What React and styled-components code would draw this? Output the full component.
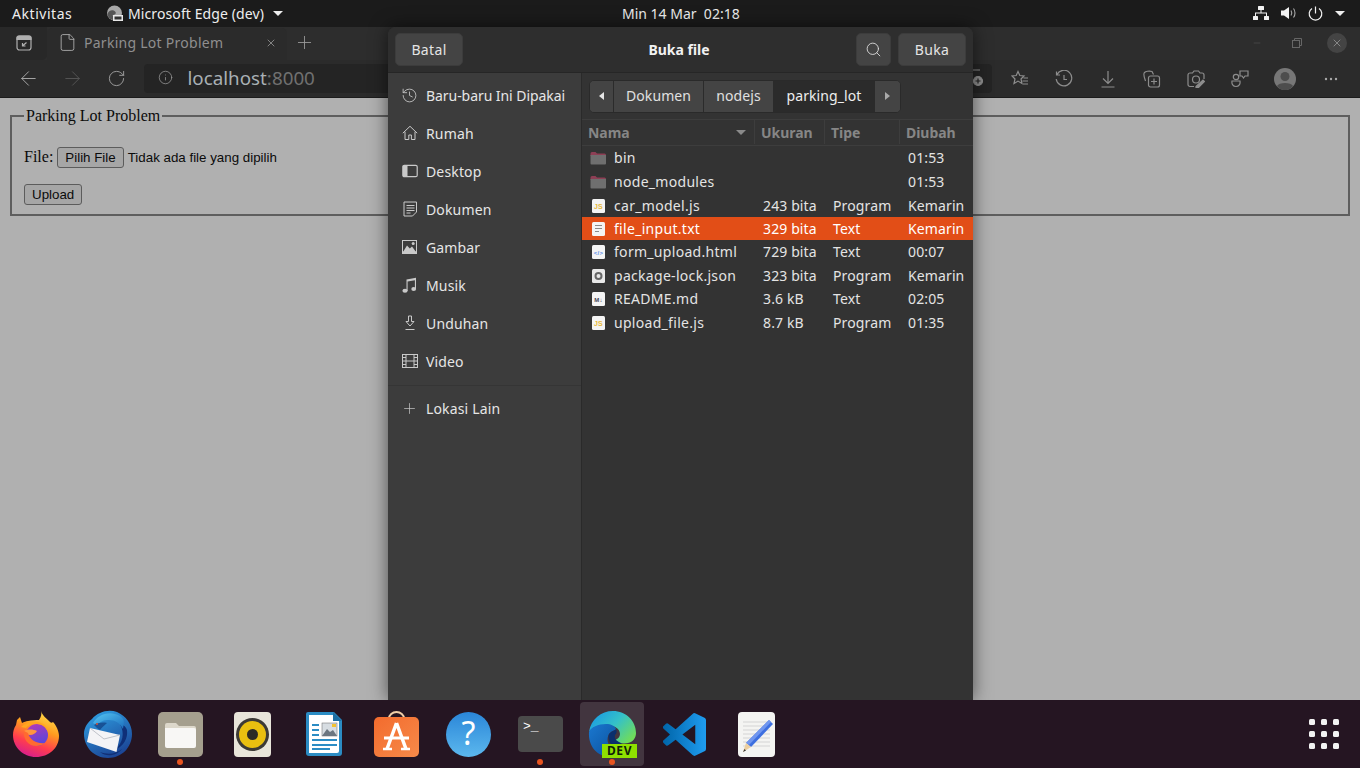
import React from "react";
import styled, { createGlobalStyle } from "styled-components";
import { History, Search, Plus, X, ArrowLeft, ArrowRight, RotateCw, Info, File as FileIcon, Minus } from "lucide-react";

const Global = createGlobalStyle`
  html, body { margin: 0; padding: 0; background: #000; }
  * { box-sizing: border-box; }
`;
const UI = `"Noto Sans", "Open Sans", sans-serif`;

const Screen = styled.div`
  width: 1360px; height: 768px; position: relative; overflow: hidden;
  display: flex; flex-direction: column; font-family: ${UI};
`;
const TopBar = styled.header`
  height: 27px; flex: none; background: #1b1b1b; color: #eee; font-size: 14px;
  display: grid; grid-template-columns: 622px auto 1fr; align-items: center;
  padding-bottom: 1px;
`;
const TopLeft = styled.div`display: flex; align-items: center; padding-left: 12px;`;
const Activities = styled.span`width: 94px; letter-spacing: .55px;`;
const AppName = styled.span`margin: 0 5px 0 5px; letter-spacing: .1px;`;
const Clock = styled.div`white-space: pre;`;
const TopRight = styled.div`display: flex; justify-content: flex-end; align-items: center; gap: 12px; padding-right: 15px;`;
const Caret = styled.i`
  display: block; width: 0; height: 0; border-left: 5px solid transparent; border-right: 5px solid transparent;
  border-top: 5px solid ${p => p.$color || "#eee"}; margin-left: ${p => p.$ml || 0}px;
`;

const TabStrip = styled.div`
  height: 33px; flex: none; background: #2d2d2d; display: flex; align-items: flex-end; padding-right: 3px;
`;
const TabActions = styled.div`
  width: 47px; height: 100%; display: flex; align-items: center; justify-content: center; background: #282828;
  border-bottom-right-radius: 5px; padding-bottom: 2px;
`;
const Tab = styled.div`
  width: 240px; height: 32px; background: #2b2b2b; border-radius: 5px 5px 0 0; display: flex; align-items: center;
  padding: 0 10px 3px 11px; color: #8f8f8f; font-size: 14px;
`;
const TabTitle = styled.span`flex: 1; margin-left: 7px; letter-spacing: .27px;`;
const NewTab = styled.div`width: 34px; height: 100%; padding-bottom: 3px; display: flex; align-items: center; justify-content: center; color: #9a9a9a;`;
const WinControls = styled.div`margin-left: auto; display: flex; height: 100%; align-items: center; padding-bottom: 2px;`;
const WinBtn = styled.div`
  width: 40px; height: 100%; display: flex; align-items: center; justify-content: center; color: #666;
`;
const CloseCircle = styled.div`width: 20px; height: 20px; border-radius: 50%; background: #444; color: #aaa; display: flex; align-items: center; justify-content: center;`;

const Toolbar = styled.div`
  height: 38px; flex: none; background: #2b2b2b; display: flex; align-items: center; padding: 0 6px 0 7px;
  border-bottom: 1px solid #1c1c1c;
`;
const NavBtn = styled.div`width: 43.5px; display: flex; justify-content: center; color: ${p => p.$dim ? "#555" : "#a8a8a8"};`;
const ReloadBtn = styled(NavBtn)`padding-left: 2px;`;
const Address = styled.div`
  flex: 1; height: 29px; background: #242424; border-radius: 4px; margin: 0 6px 1px 6px;
  display: flex; align-items: center; padding: 0 7px 1px 14px; color: #999; font-size: 18.8px;
`;
const Host = styled.span`color: #a9b0b5; margin-left: 15px; flex: 1;`;
const Port = styled.span`color: #707070;`;
const ToolIcon = styled.div`width: ${p => p.$w || 44}px; display: flex; justify-content: center; color: #8d8d8d;`;

const Page = styled.main`
  flex: 1; background: #b0b0b0; padding: 9px 10px 0; font-family: "Liberation Serif", serif; font-size: 16px; color: #0b0b0b;
`;
const Fieldset = styled.fieldset`
  margin: 0; border: 2px solid #5e5e5e; padding: 21px 12px 8px; height: 109px;
  legend { padding: 0 2px 0 2px; line-height: 18px; }
`;
const FileRow = styled.div`display: flex; align-items: center; height: 22px; margin-bottom: 16px;`;
const PageBtn = styled.span`
  display: inline-flex; align-items: center; justify-content: center; height: 21px; padding: 0 7px; background: #a6a6a6;
  border: 1px solid #5c5c5c; border-radius: 3px; font: 13.33px "Liberation Sans", sans-serif; color: #0b0b0b;
`;
const FileHint = styled.span`font: 13.33px "Liberation Sans", sans-serif; margin-left: 4px;`;
const FileLabel = styled.span`margin-right: 4px;`;

const Dock = styled.footer`
  height: 68px; flex: none; background: #251522; display: flex; align-items: stretch; position: relative; z-index: 2;
`;
const DockItem = styled.div`
  width: 72px; height: 68px; position: relative; display: flex; align-items: center; justify-content: center;
  ${p => p.$active && `
    &::before { content: ""; position: absolute; left: 4px; right: 4px; top: 2px; bottom: 2px; background: #42353f; border-radius: 4px; }
  `}
  ${p => p.$running && `
    &::after { content: ""; position: absolute; left: 33px; bottom: 3px; width: 6px; height: 6px; border-radius: 50%; background: #e95420; }
  `}
  svg { position: relative; }
`;
const DockSpacer = styled.div`flex: 1;`;
const DevTag = styled.span`
  position: absolute; left: 26px; top: 44px; width: 35px; height: 14px; background: #8ee000; color: #10200a;
  font: 700 12px/14px ${UI}; text-align: center; letter-spacing: .6px;
`;

const Dialog = styled.section`
  position: absolute; left: 388px; top: 27px; width: 585px; height: 673px; z-index: 1;
  background: #333; border-radius: 8px 8px 0 0; display: flex; flex-direction: column; color: #e8e8e8;
  box-shadow: 0 0 18px rgba(0,0,0,.55); font-size: 14px;
`;
const DialogHeader = styled.div`
  height: 46px; flex: none; background: #2e2e2e; border-bottom: 1px solid #262626; border-radius: 8px 8px 0 0;
  display: flex; align-items: center; padding: 0 7px; gap: 7px;
`;
const HeadBtn = styled.button`
  height: 33px; width: ${p => p.$w}px; border: 1px solid #3c3c3c; border-radius: 5px; background: #444; color: #e4e4e4; padding: 0;
  font: 14px ${UI}; letter-spacing: .35px; display: flex; align-items: center; justify-content: center; margin-top: -1px;
`;
const DialogTitle = styled.div`flex: 1; text-align: center; font-weight: 700; font-size: 14px; color: #f2f2f2; padding-left: 39px; margin-top: -1px;`;
const DialogBody = styled.div`flex: 1; display: flex; min-height: 0;`;
const Sidebar = styled.nav`width: 194px; flex: none; background: #3c3c3c; border-right: 1px solid #2a2a2a; padding-top: 3px;`;
const Place = styled.div`
  height: 38px; display: flex; align-items: center; padding-left: 13px; gap: 8px; color: #e6e6e6; font-size: 14px; letter-spacing: ${p => p.$tight ? "-.06px" : ".15px"};
`;
const PlaceIcon = styled.span`width: 17px; height: 17px; flex: none; display: flex; align-items: center; justify-content: center; color: #c9c9c9;`;
const SideDivider = styled.div`height: 1px; background: #353535; margin: 5px 0 3px;`;
const Main = styled.div`flex: 1; min-width: 0; display: flex; flex-direction: column;`;
const PathBarWrap = styled.div`height: 47px; flex: none; padding: 7px 0 0 7px; border-bottom: 1px solid #3d3d3d;`;
const PathBar = styled.div`
  display: inline-flex; height: 33px; border: 1px solid #2a2a2a; border-radius: 5px; overflow: hidden; background: #444;
`;
const PathSeg = styled.div`
  width: ${p => p.$w}px; display: flex; align-items: center; justify-content: center; color: ${p => p.$on ? "#eee" : "#e0e0e0"};
  background: ${p => p.$on ? "#2b2b2b" : "#444"}; border-right: ${p => p.$sep ? "1px solid #2b2b2b" : "none"}; font-size: 14px; letter-spacing: .1px; padding-bottom: 2px;
`;
const TriL = styled.i`width: 0; height: 0; border-top: 4.5px solid transparent; border-bottom: 4.5px solid transparent; border-right: 5px solid #e6e6e6;`;
const TriR = styled.i`width: 0; height: 0; border-top: 4.5px solid transparent; border-bottom: 4.5px solid transparent; border-left: 5px solid #aaa;`;
const ListHeader = styled.div`
  display: grid; grid-template-columns: 172px 70px 75px 1fr; height: 26px; padding-bottom: 1px; flex: none; border-bottom: 1px solid #3d3d3d;
  font-size: 14px; font-weight: 700; color: #868686; letter-spacing: -.05px;
`;
const HeadCell = styled.div`
  display: flex; align-items: center; justify-content: space-between; padding: 0 ${p => p.$pr || 0}px 0 6px;
  border-left: ${p => p.$first ? "none" : "1px solid #3d3d3d"};
`;
const SortCaret = styled.i`width: 0; height: 0; border-left: 5px solid transparent; border-right: 5px solid transparent; border-top: 5px solid #8a8a8a;`;
const Row = styled.div`
  display: grid; grid-template-columns: 173px 70px 75px 1fr; height: ${p => p.$h}px; padding-bottom: ${p => p.$h - 23}px; align-items: center; font-size: 14px; letter-spacing: .12px;
  color: ${p => p.$sel ? "#fff" : "#e4e4e4"}; background: ${p => p.$sel ? "#e24e17" : "transparent"};
`;
const NameCell = styled.div`display: flex; align-items: center; padding-left: 8px; gap: 8px; white-space: nowrap; letter-spacing: .3px;`;
const FileGlyph = styled.span`width: 16px; height: 16px; flex: none; display: flex; align-items: center; justify-content: center;`;
const Cell = styled.div`padding-left: 8px; white-space: nowrap;`;

const S = { fill: "none", stroke: "currentColor", strokeWidth: 1.2 };

const EdgeMini = () => (
  <svg width="17" height="17" viewBox="0 0 17 17">
    <circle cx="8.5" cy="8" r="7.5" fill="#a8a8a8" />
    <path d="M1.5 9c1-4 6-5 8-2 1 2-1 3-3 3 1 3 4 5 8 2-2 4-12 5-13-3z" fill="#555" />
    <rect x="7" y="10" width="10" height="6" fill="#e8e8e8" />
    <rect x="8.5" y="11.5" width="7" height="3" fill="#333" />
  </svg>
);
const NetIcon = () => (
  <svg width="16" height="14" viewBox="0 0 16 14" fill="#f2f2f2">
    <rect x="5" y="0" width="6" height="4" rx=".5" /><rect x="0" y="10" width="5" height="4" rx=".5" /><rect x="11" y="10" width="5" height="4" rx=".5" />
    <path d="M7.5 4h1v2.500h5.500V10h-1V7.500H3V10H2V6.500h5.500z" />
  </svg>
);
const SpeakerIcon = () => (
  <svg width="15" height="14" viewBox="0 0 15 14">
    <path d="M0 4.500h3L8 1v12L3 9.500H0z" fill="#f2f2f2" />
    <path d="M10 4.500c1 1.500 1 3.500 0 5M12.500 2.500c2 2.500 2 6.500 0 9" fill="none" stroke="#aaa" strokeWidth="1.100" />
  </svg>
);
const PowerIcon = () => (
  <svg width="15" height="15" viewBox="0 0 15 15" fill="none" stroke="#f2f2f2" strokeWidth="1.200">
    <path d="M7.500 0.500v7M4 2.500a6.300 6.300 0 1 0 7 0" />
  </svg>
);
const TabActionIcon = () => (
  <svg width="16" height="16" viewBox="0 0 16 16" fill="none" stroke="#b0b0b0" strokeWidth="1.200">
    <rect x="1" y="1" width="14" height="14" rx="2.500" /><path d="M1 4.500h14V2.500a1.500 1.500 0 0 0-1.500-1.500h-11A1.500 1.500 0 0 0 1 2.500z" fill="#b0b0b0" />
    <path d="M10.500 7.500l-3.500 3M6.500 8v3h3" />
  </svg>
);
const StarList = () => (
  <svg width="18" height="18" viewBox="0 0 18 18" {...S}>
    <path d="M7 1.500l1.800 4 4.200.5-3 3 1 4.500-4-2.400-4 2.400 1-4.500-3-3 4.200-.5zM12.500 8H17M11.500 11H17M12 14h5" />
  </svg>
);
const HistIcon = () => (
  <svg width="18" height="18" viewBox="0 0 18 18" {...S}>
    <path d="M2 4.500A7.800 7.800 0 1 1 1.200 9M1.500 1.500v3.500H5M9 5v4.500h3" />
  </svg>
);
const DownIcon = () => (
  <svg width="18" height="18" viewBox="0 0 18 18" {...S}>
    <path d="M9 1v12M4 8.500l5 5 5-5M2.500 17h13" />
  </svg>
);
const Collections = () => (
  <svg width="18" height="18" viewBox="0 0 18 18" {...S}>
    <path d="M2.500 11C1 7 .5 3.500 1.500 2.500S6 .5 9 1.500l1.500 3" /><rect x="5.500" y="6" width="11" height="11" rx="2" /><path d="M11 8.500v6M8 11.500h6" />
  </svg>
);
const CamIcon = () => (
  <svg width="18" height="18" viewBox="0 0 18 18" {...S}>
    <path d="M7 16.500H3a2 2 0 0 1-2-2V5a2 2 0 0 1 2-2h2.500L7 1h4.500L13 3h2a2 2 0 0 1 2 2v4" /><circle cx="9" cy="9.500" r="3.500" />
    <path d="M9 16.500l7-6.500 1.500 1.500-6.500 6.500H9z" fill="currentColor" />
  </svg>
);
const People = () => (
  <svg width="18" height="18" viewBox="0 0 18 18" {...S}>
    <circle cx="5" cy="7" r="2.700" /><path d="M1 11h8c.5 3-1 5.500-4 5.500S.5 14 1 11zM9 1h8v5h-3l-1.500 2L11 6H9z" />
  </svg>
);
const Avatar = () => (
  <svg width="22" height="22" viewBox="0 0 22 22">
    <circle cx="11" cy="11" r="11" fill="#777" /><circle cx="11" cy="8.500" r="4.500" fill="#4d4d4d" />
    <path d="M3 18c2-4 14-4 16 0-4 5.500-12 5.500-16 0z" fill="#4d4d4d" />
  </svg>
);
const Dots = () => (
  <svg width="14" height="4" viewBox="0 0 14 4" fill="#a8a8a8"><circle cx="2" cy="2" r="1.200" /><circle cx="7" cy="2" r="1.200" /><circle cx="12" cy="2" r="1.200" /></svg>
);
const AddressAdd = () => (
  <svg width="18" height="18" viewBox="0 0 18 18" fill="none" stroke="#8d8d8d" strokeWidth="1.200">
    <path d="M1 8L5 1h8" /><circle cx="11" cy="12" r="4.500" fill="#8d8d8d" /><path d="M11 9.500v5M8.500 12h5" stroke="#242424" />
  </svg>
);

const HomeIcon = () => (
  <svg width="16" height="16" viewBox="0 0 16 16" fill="none" stroke="currentColor" strokeWidth="1">
    <path d="M.8 8.200L8 1.300l7.200 6.900M3 6.800v7.700h3.800v-4.500h2.600v4.500H13V6.800" />
  </svg>
);
const DesktopIcon = () => (
  <svg width="16" height="16" viewBox="0 0 16 16">
    <rect x=".8" y="2.300" width="14.400" height="11.400" rx="1.500" fill="none" stroke="currentColor" strokeWidth="1.200" />
    <path d="M1 3h4.500v10H1z" fill="currentColor" />
  </svg>
);
const DocIcon = () => (
  <svg width="16" height="16" viewBox="0 0 16 16" fill="none" stroke="currentColor" strokeWidth="1">
    <path d="M2 1h12.500v10l-4 4H2zM4.500 4.500h8M4.500 7h8M4.500 9.500h8M4.500 12h4" />
  </svg>
);
const ImageIcon = () => (
  <svg width="15" height="14" viewBox="0 0 15 14">
    <rect x=".5" y=".5" width="14" height="13" fill="none" stroke="currentColor" />
    <path d="M1 12L5 5.500l2.800 3L10 6.500l4 5.500z" fill="currentColor" />
    <circle cx="11.200" cy="3.500" r="1.500" fill="currentColor" />
    <path d="M1 11.500h13V13.500H1z" fill="currentColor" />
  </svg>
);
const MusicIcon = () => (
  <svg width="15" height="16" viewBox="0 0 15 16" fill="currentColor">
    <path d="M4.500 2.500L14 .8v11.200h-1.100V3.300L5.600 4.600V14H4.500z" />
    <ellipse cx="3" cy="13.700" rx="2.600" ry="2" /><ellipse cx="11.700" cy="12" rx="2.400" ry="2" />
  </svg>
);
const DownloadPlace = () => (
  <svg width="16" height="16" viewBox="0 0 16 16" fill="none" stroke="currentColor" strokeWidth="1">
    <path d="M6.500 1h3v5.500H12L8 11 4 6.500h2.500zM3.500 14.500h9" />
  </svg>
);
const VideoIcon = () => (
  <svg width="16" height="14" viewBox="0 0 16 14" fill="none" stroke="currentColor">
    <rect x=".5" y=".5" width="15" height="13" /><path d="M4 .5v13M12 .5v13M.5 3.500H4M.5 7H4M.5 10.500H4M12 3.500h3.500M12 7h3.500M12 10.500h3.500M4 7h8" />
  </svg>
);

const Folder = () => (
  <svg width="16" height="14" viewBox="0 0 16 14">
    <path d="M.5 2.500A1.500 1.500 0 0 1 2 1h3.500l1.500 1.500h7.500A1.500 1.500 0 0 1 16 4v1H.5z" fill="#8e3f55" />
    <path d="M.5 4H16v8.500a1 1 0 0 1-1 1H1.500a1 1 0 0 1-1-1z" fill="#6f6f6f" />
  </svg>
);
const Badge = ({ children, color, size = 7 }) => (
  <svg width="13" height="14" viewBox="0 0 13 14">
    <rect width="13" height="14" rx="1.500" fill="#f4f4f4" />
    <text x="6.500" y="9.500" textAnchor="middle" fontSize={size} fontWeight="700" fill={color} fontFamily="Liberation Sans, sans-serif">{children}</text>
  </svg>
);
const TxtBadge = () => (
  <svg width="13" height="14" viewBox="0 0 13 14">
    <rect width="13" height="14" rx="1.500" fill="#f4f4f4" />
    <path d="M3 3.500h7M3 6.500h7M3 9.500h4" stroke="#8a8a8a" strokeWidth="1" />
  </svg>
);
const PkgBadge = () => (
  <svg width="13" height="14" viewBox="0 0 13 14">
    <rect width="13" height="14" rx="1.500" fill="#e8e8e8" />
    <circle cx="6.500" cy="7" r="3" fill="none" stroke="#666" strokeWidth="2" />
  </svg>
);

const files = [
  { h: 24, name: "bin", icon: <Folder />, mod: "01:53" },
  { h: 24, name: "node_modules", icon: <Folder />, mod: "01:53" },
  { h: 23, name: "car_model.js", icon: <Badge color="#e8b93a">JS</Badge>, size: "243 bita", type: "Program", mod: "Kemarin" },
  { h: 23, name: "file_input.txt", icon: <TxtBadge />, size: "329 bita", type: "Text", mod: "Kemarin", sel: true },
  { h: 24, name: "form_upload.html", icon: <Badge color="#5b8de8" size={6}>&lt;/&gt;</Badge>, size: "729 bita", type: "Text", mod: "00:07" },
  { h: 23, name: "package-lock.json", icon: <PkgBadge />, size: "323 bita", type: "Program", mod: "Kemarin" },
  { h: 24, name: "README.md", icon: <Badge color="#445" size={6}>M↓</Badge>, size: "3.6 kB", type: "Text", mod: "02:05" },
  { h: 24, name: "upload_file.js", icon: <Badge color="#e8b93a">JS</Badge>, size: "8.7 kB", type: "Program", mod: "01:35" },
];

const places = [
  ["Baru-baru Ini Dipakai", <History size={17} strokeWidth={1.2} />, true],
  ["Rumah", <HomeIcon />],
  ["Desktop", <DesktopIcon />],
  ["Dokumen", <DocIcon />],
  ["Gambar", <ImageIcon />],
  ["Musik", <MusicIcon />],
  ["Unduhan", <DownloadPlace />],
  ["Video", <VideoIcon />],
];

const Firefox = () => (
  <svg width="48" height="48" viewBox="0 0 48 48">
    <defs>
      <linearGradient id="ff1" x1="0.75" y1="0" x2="0.35" y2="1"><stop offset="0" stopColor="#ffe34d" /><stop offset=".4" stopColor="#ff9a1f" /><stop offset=".72" stopColor="#ff3d4e" /><stop offset="1" stopColor="#d81e8c" /></linearGradient>
      <linearGradient id="ff2" x1="0.3" y1="0" x2="0.7" y2="1"><stop offset="0" stopColor="#b03ab8" /><stop offset="1" stopColor="#5048e0" /></linearGradient>
    </defs>
    <path d="M29 1c1 4 6 8 9 11 1 1 2 1 3 0 3 3 6 9 6 14 0 12-10 21-23 21C11 47 1 37 1 25c0-4 1-7 3-10l1-5 3-3 2 6c2-1 4-2 6-2 4-1 8-1 11-1 2-3 3-6 2-9z" fill="url(#ff1)" />
    <circle cx="25" cy="25" r="11" fill="url(#ff2)" />
    <path d="M9 17c4-4 11-6 17-5 5 1 9 4 10 10-2-5-6-8-11-8-5-1-9 1-11 4z" fill="#ffa51f" />
    <path d="M12 21c4-2 9-2 13 0-1 2-4 4-7 4-3 0-5-1-6-4z" fill="#ff9540" />
    <path d="M12 21c-1 8 4 15 12 15 4 0 7-1 9-3-7 1-15-2-17-10z" fill="#ff6a30" />
  </svg>
);
const Thunderbird = () => (
  <svg width="48" height="48" viewBox="0 0 48 48">
    <defs>
      <linearGradient id="tb" x1="0.3" y1="0" x2="0.8" y2="1"><stop offset="0" stopColor="#2e9ce0" /><stop offset="1" stopColor="#1a3d8f" /></linearGradient>
      <linearGradient id="tb2" x1="0" y1="0" x2="1" y2="1"><stop offset="0" stopColor="#56c6f2" /><stop offset="1" stopColor="#1c6fbf" /></linearGradient>
    </defs>
    <path d="M8 9C14 2 24-1 33 2c9 4 15 12 15 22 0 13-10 24-24 24S0 37 0 24c0-6 3-11 8-15z" fill="url(#tb)" />
    <path d="M36 14c5 9 3 19-5 26 9-4 13-12 12-20-1-3-3-5-7-6z" fill="#0f2f78" />
    <path d="M9 13C14 4 26 0 36 6c5 3 4 7 3 13-3-6-8-9-14-9-5 0-9 1-12 6z" fill="url(#tb2)" />
    <path d="M10 15c3-2 8-3 13-2-2 2-5 4-7 7-2-1-4-3-6-5z" fill="#185296" />
    <circle cx="13" cy="14" r="1.100" fill="#c8503a" />
    <path d="M6 18l30 7-3.500 17L3 32z" fill="#f4f4f6" />
    <path d="M6 18l14 11 16-4" fill="none" stroke="#b9bcc4" strokeWidth=".9" />
    <path d="M16 42c8 3 16 2 22-3-4 6-15 9-22 3z" fill="#122f74" />
  </svg>
);
const FilesIcon = () => (
  <svg width="45" height="45" viewBox="0 0 45 45">
    <rect width="45" height="45" rx="5" fill="#a59f8e" />
    <path d="M7 13a2 2 0 0 1 2-2h9l3 3h15a2 2 0 0 1 2 2v3H7z" fill="#ddd8cb" />
    <path d="M7 16h29a2 2 0 0 1 2 2v16a2 2 0 0 1-2 2H9a2 2 0 0 1-2-2z" fill="#f8f7f5" />
  </svg>
);
const Rhythmbox = () => (
  <svg width="37" height="45" viewBox="0 0 37 45">
    <rect width="37" height="45" rx="4" fill="#e8e5da" />
    <circle cx="18.500" cy="22.500" r="16.500" fill="#3c3a36" />
    <circle cx="18.500" cy="22.500" r="13.500" fill="#e9bf10" />
    <circle cx="18.500" cy="22.500" r="5.500" fill="#2c2a26" />
  </svg>
);
const Writer = () => (
  <svg width="36" height="44" viewBox="0 0 36 44">
    <path d="M2 0h26l8 8v33a3 3 0 0 1-3 3H3a3 3 0 0 1-3-3V2a2 2 0 0 1 2-2z" fill="#2b8cc4" />
    <path d="M3 3h24l6 6v30a2 2 0 0 1-2 2H3z" fill="#fff" />
    <path d="M27 0l9 9h-9z" fill="#1d6fa3" />
    <path d="M6 12h7v2H6zM6 17h7v2H6zM6 22h7v2H6zM6 27h25v2H6zM6 32h25v2H6zM6 36h18v2H6z" fill="#2b8cc4" />
    <rect x="16" y="11" width="15" height="13" fill="#d7dde2" stroke="#666" strokeWidth=".5" />
    <path d="M16 24l5-7 3 3 3-2 4 6z" fill="#6c7680" />
    <rect x="26" y="12" width="4" height="3" fill="#f2c230" />
  </svg>
);
const Store = () => (
  <svg width="45" height="46" viewBox="0 0 45 46">
    <defs><linearGradient id="st" x1="0" y1="0" x2="1" y2="1"><stop offset="0" stopColor="#f36b2d" /><stop offset="1" stopColor="#f68a4a" /></linearGradient></defs>
    <path d="M15 10V7.500a7.500 6.500 0 0 1 15 0V10" fill="none" stroke="#f0cfa8" strokeWidth="2" />
    <rect y="6" width="45" height="40" rx="5" fill="url(#st)" />
    <path d="M22.500 12L13 38M22.500 12L32 38" stroke="#fff" strokeWidth="3.500" fill="none" />
    <path d="M10 27h25" stroke="#fff" strokeWidth="3" />
    <path d="M9 38h9M27 38h9" stroke="#fff" strokeWidth="2.500" />
  </svg>
);
const Help = () => (
  <svg width="45" height="45" viewBox="0 0 45 45">
    <defs><linearGradient id="hp" x1="0" y1="0" x2="0" y2="1"><stop offset="0" stopColor="#2a86d8" /><stop offset="1" stopColor="#5cb8ee" /></linearGradient></defs>
    <circle cx="22.500" cy="22.500" r="22.500" fill="url(#hp)" />
    <text x="22.500" y="33" textAnchor="middle" fontSize="32" fill="#fff" fontFamily="Noto Sans, sans-serif">?</text>
  </svg>
);
const Terminal = () => (
  <svg width="45" height="37" viewBox="0 0 45 37">
    <rect width="45" height="36" rx="4" fill="#4a4a4a" />
    <text x="5" y="14" fontSize="13" fill="#fff" fontFamily="Liberation Mono, monospace">&gt;_</text>
  </svg>
);
const Edge = () => (
  <svg width="48" height="48" viewBox="0 0 48 48">
    <defs>
      <linearGradient id="ed1" x1="0.1" y1="0.1" x2="1" y2="0.7"><stop offset="0" stopColor="#1b9de2" /><stop offset=".5" stopColor="#35c1c8" /><stop offset="1" stopColor="#6fdc5c" /></linearGradient>
      <linearGradient id="ed2" x1="0" y1="0" x2="1" y2="1"><stop offset="0" stopColor="#1a78d0" /><stop offset="1" stopColor="#0b4f9a" /></linearGradient>
    </defs>
    <path d="M1 22C3 9 13 1 25 1c13 0 23 10 23 22 0 5-3 9-8 10-5 1-11 0-13-3 3-1 5-3 5-6 0-6-7-9-14-9C11 15 4 17 1 22z" fill="url(#ed1)" />
    <path d="M1 22c2-5 9-8 17-8 5 0 9 2 10 5 0 1-5 2-7 5-3 5-1 11 3 16 1 2 4 4 7 5-3 1-5 2-8 2C9 47 0 36 1 22z" fill="url(#ed2)" />
    <path d="M21 24c3-3 7-4 7-5 1 2 1 4-1 6-1 3 1 6 6 8 2 2 0 5-3 6-7-2-11-10-9-15z" fill="#0b2f6c" />
  </svg>
);
const VSCode = () => (
  <svg width="43" height="43" viewBox="0 0 24 24">
    <defs><linearGradient id="vs" x1="0" y1="0" x2="1" y2="0"><stop offset="0" stopColor="#0065a9" /><stop offset="1" stopColor="#1f9cf0" /></linearGradient></defs>
    <path fill="url(#vs)" d="M23.150 2.587L18.210.21a1.494 1.494 0 0 0-1.705.29l-9.460 8.630-4.120-3.128a.999.999 0 0 0-1.276.057L.327 7.261A1 1 0 0 0 .326 8.740L3.899 12 .326 15.260a1 1 0 0 0 .001 1.479L1.650 17.940a.999.999 0 0 0 1.276.057l4.120-3.128 9.460 8.630a1.492 1.492 0 0 0 1.704.29l4.942-2.377A1.500 1.500 0 0 0 24 20.060V3.939a1.500 1.500 0 0 0-.850-1.352zm-5.146 14.861L10.826 12l7.178-5.448v10.896z" />
  </svg>
);
const Gedit = () => (
  <svg width="37" height="45" viewBox="0 0 37 45">
    <rect width="37" height="45" rx="4" fill="#f4f4f2" />
    <path d="M5 10h27M5 14h27M5 18h27M5 22h27M5 26h27M5 30h27M5 34h27" stroke="#d4d4d4" strokeWidth="1" />
    <path d="M31 8l4 4-22 23-5-4z" fill="#3d6fe0" />
    <path d="M31 8l2 2-22 23-3-2z" fill="#7096ef" />
    <path d="M8 31l5 4-8 5z" fill="#eccfa0" />
    <path d="M6.500 37l-1.500 3 3-1.500z" fill="#333" />
  </svg>
);
const AppGrid = () => (
  <svg width="30" height="30" viewBox="0 0 30 30" fill="#f2f2f2">
    {[0, 1, 2].flatMap(r => [0, 1, 2].map(c => <rect key={r + "-" + c} x={c * 12} y={r * 12} width="6" height="6" rx="1.500" />))}
  </svg>
);

export default function App() {
  return (
    <Screen>
      <Global />
      <TopBar>
        <TopLeft>
          <Activities>Aktivitas</Activities>
          <EdgeMini />
          <AppName>Microsoft Edge (dev)</AppName>
          <Caret $ml={4} />
        </TopLeft>
        <Clock>Min 14 Mar  02:18</Clock>
        <TopRight><NetIcon /><SpeakerIcon /><PowerIcon /><Caret /></TopRight>
      </TopBar>
      <TabStrip>
        <TabActions><TabActionIcon /></TabActions>
        <Tab>
          <FileIcon size={19} strokeWidth={1.1} color="#b0b0b0" />
          <TabTitle>Parking Lot Problem</TabTitle>
          <X size={12} strokeWidth={1.5} color="#a0a0a0" />
        </Tab>
        <NewTab><Plus size={21} strokeWidth={1} /></NewTab>
        <WinControls>
          <WinBtn><Minus size={10} strokeWidth={1} /></WinBtn>
          <WinBtn><svg width="10" height="10" viewBox="0 0 10 10" fill="none" stroke="currentColor"><rect x=".5" y="2.500" width="7" height="7" /><path d="M2.500 2.500v-2h7v7h-2" /></svg></WinBtn>
          <WinBtn><CloseCircle><X size={12} strokeWidth={1.3} /></CloseCircle></WinBtn>
        </WinControls>
      </TabStrip>
      <Toolbar>
        <NavBtn><ArrowLeft size={23} strokeWidth={1} /></NavBtn>
        <NavBtn $dim><ArrowRight size={23} strokeWidth={1} /></NavBtn>
        <ReloadBtn><RotateCw size={19} strokeWidth={1.1} /></ReloadBtn>
        <Address>
          <Info size={15} strokeWidth={1.2} />
          <Host>localhost<Port>:8000</Port></Host>
          <AddressAdd />
        </Address>
        <ToolIcon><StarList /></ToolIcon>
        <ToolIcon><HistIcon /></ToolIcon>
        <ToolIcon><DownIcon /></ToolIcon>
        <ToolIcon><Collections /></ToolIcon>
        <ToolIcon><CamIcon /></ToolIcon>
        <ToolIcon><People /></ToolIcon>
        <ToolIcon $w={46}><Avatar /></ToolIcon>
        <ToolIcon $w={46}><Dots /></ToolIcon>
      </Toolbar>
      <Page>
        <Fieldset>
          <legend>Parking Lot Problem</legend>
          <FileRow><FileLabel>File:</FileLabel><PageBtn>Pilih File</PageBtn><FileHint>Tidak ada file yang dipilih</FileHint></FileRow>
          <PageBtn>Upload</PageBtn>
        </Fieldset>
      </Page>
      <Dock>
        <DockItem><Firefox /></DockItem>
        <DockItem><Thunderbird /></DockItem>
        <DockItem $running><FilesIcon /></DockItem>
        <DockItem><Rhythmbox /></DockItem>
        <DockItem><Writer /></DockItem>
        <DockItem><Store /></DockItem>
        <DockItem><Help /></DockItem>
        <DockItem $running><Terminal /></DockItem>
        <DockItem $running $active><Edge /><DevTag>DEV</DevTag></DockItem>
        <DockItem><VSCode /></DockItem>
        <DockItem><Gedit /></DockItem>
        <DockSpacer />
        <DockItem><AppGrid /></DockItem>
      </Dock>
      <Dialog>
        <DialogHeader>
          <HeadBtn $w={68}>Batal</HeadBtn>
          <DialogTitle>Buka file</DialogTitle>
          <HeadBtn $w={35}><Search size={17} strokeWidth={1.2} /></HeadBtn>
          <HeadBtn $w={68}>Buka</HeadBtn>
        </DialogHeader>
        <DialogBody>
          <Sidebar>
            {places.map(([label, icon, tight]) => <Place key={label} $tight={tight}><PlaceIcon>{icon}</PlaceIcon><span>{label}</span></Place>)}
            <SideDivider />
            <Place><PlaceIcon><Plus size={17} strokeWidth={1} /></PlaceIcon><span>Lokasi Lain</span></Place>
          </Sidebar>
          <Main>
            <PathBarWrap>
              <PathBar>
                <PathSeg $w={24} $sep><TriL /></PathSeg>
                <PathSeg $w={90} $sep>Dokumen</PathSeg>
                <PathSeg $w={69}>nodejs</PathSeg>
                <PathSeg $w={102} $on>parking_lot</PathSeg>
                <PathSeg $w={25}><TriR /></PathSeg>
              </PathBar>
            </PathBarWrap>
            <ListHeader>
              <HeadCell $first $pr={8}>Nama<SortCaret /></HeadCell>
              <HeadCell>Ukuran</HeadCell>
              <HeadCell>Tipe</HeadCell>
              <HeadCell>Diubah</HeadCell>
            </ListHeader>
            {files.map(f => (
              <Row key={f.name} $sel={f.sel} $h={f.h}>
                <NameCell><FileGlyph>{f.icon}</FileGlyph><span>{f.name}</span></NameCell>
                <Cell>{f.size}</Cell>
                <Cell>{f.type}</Cell>
                <Cell>{f.mod}</Cell>
              </Row>
            ))}
          </Main>
        </DialogBody>
      </Dialog>
    </Screen>
  );
}
